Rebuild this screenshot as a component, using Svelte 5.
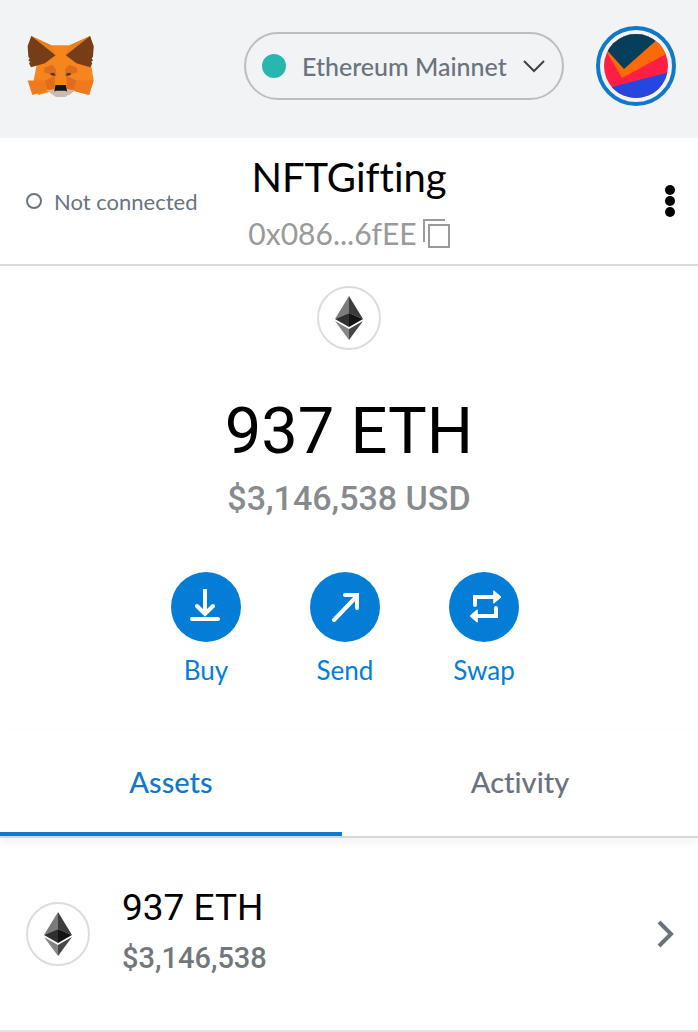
<script lang="ts">
  type Tab = 'assets' | 'activity';

  const networks = ['Ethereum Mainnet'];
  const account = { name: 'NFTGifting', address: '0x086...6fEE' };
  const balance = { amount: '937 ETH', fiat: '$3,146,538' };

  let network = $state(networks[0]);
  let tab = $state<Tab>('assets');
</script>

{#snippet token()}
  <span class="token">
    <svg viewBox="0 0 28 44" width="28" height="44" aria-hidden="true">
      <path d="M14 0 0 23l14-6z" fill="#7b7b7b" />
      <path d="M14 0v17l14 6z" fill="#3c3c3b" />
      <path d="M0 23l14-6v14z" fill="#303030" />
      <path d="M28 23l-14-6v14z" fill="#141414" />
      <path d="M0 25l14 8v11z" fill="#858585" />
      <path d="M28 25l-14 8v11z" fill="#464646" />
    </svg>
  </span>
{/snippet}

<div class="wallet">
  <header>
    <svg class="fox" viewBox="36 28 202 188" role="img" aria-label="MetaMask">
      <path d="M49 30l60 28h56l61-28 11 34-8 52 8 48-14 44-45-12-16 12h-30l-17-12-45 12-14-44 9-46-6-54z" fill="#f6851b" />
      <path d="M49 30l60 28 13 30zM226 30l-61 28-12 30z" fill="#e8821e" />
      <path d="M49 30l73 58-32 24-42 12-6-12 4-4-6-4 4-6-4-6-2-32z" fill="#763d16" />
      <path d="M226 30l-73 58 32 24 42 12 6-12-4-4 6-4-4-6 4-6 2-32z" fill="#763d16" />
      <path d="M88 126l24-9 12 13v20l-36-10zM187 126l-24-9-12 13v20l36-10z" fill="#e06c20" />
      <path d="M38 164h52l6 32-44 12zM237 164h-52l-6 32 44 12z" fill="#ed7a1c" />
      <path d="M90 164l30-14v28l-4 16-20-4zM185 164l-30-14v28l4 16 20-4z" fill="#e06c20" />
      <path d="M105 143l12-2 6 9-13-1zM170 143l-12-2-6 9 13-1z" fill="#4b3a34" />
      <path d="M96 194l24-4h35l24 4-27 20h-29z" fill="#c9bbb0" />
      <path d="M122 178h31l4 20-5-3h-29l-5 3z" fill="#161616" />
    </svg>

    <label class="network">
      <span class="dot"></span>
      <select bind:value={network} aria-label="Network">
        {#each networks as name}
          <option>{name}</option>
        {/each}
      </select>
      <svg viewBox="0 0 22 14" width="22" height="14" aria-hidden="true">
        <path d="M1 2l10 10L21 2" fill="none" stroke="#3f4347" stroke-width="2" />
      </svg>
    </label>

    <button class="avatar" aria-label="My accounts">
      <svg viewBox="0 0 64 64" width="64" height="64" aria-hidden="true">
        <rect width="64" height="64" fill="#ff1f44" />
        <path d="M-2 10L18 44l48-26V-2H-2z" fill="#fb6a09" />
        <path d="M0 13L20 35 56 3 40-4H8z" fill="#063f5b" />
        <path d="M0 55l66-17v28H0z" fill="#2447df" />
      </svg>
    </button>
  </header>

  <section class="account">
    <button class="status"><span class="ring"></span>Not connected</button>
    <button class="identity">
      <span class="name">{account.name}</span>
      <span class="address">
        {account.address}
        <svg viewBox="0 0 27 29" width="27" height="29" aria-hidden="true">
          <path d="M22 1H1v22M6 6h20v22H6z" fill="none" stroke="#989a9b" stroke-width="2" />
        </svg>
      </span>
    </button>
    <button class="more" aria-label="Account options">
      <svg viewBox="0 0 10 32" width="10" height="32" aria-hidden="true">
        <circle cx="5" cy="5" r="5" />
        <circle cx="5" cy="16" r="5" />
        <circle cx="5" cy="27" r="5" />
      </svg>
    </button>
  </section>

  <section class="overview">
    {@render token()}
    <p class="amount">{balance.amount}</p>
    <p class="fiat">{balance.fiat} USD</p>

    <div class="actions">
      <button>
        <span class="circle">
          <svg viewBox="0 0 36 36" width="36" height="36" aria-hidden="true">
            <path d="M17 1v24M9 17l8 8 8-8M4 30h26" />
          </svg>
        </span>
        Buy
      </button>
      <button>
        <span class="circle">
          <svg viewBox="0 0 36 36" width="36" height="36" aria-hidden="true">
            <path d="M7 31L30 7M18 6h12v13" />
          </svg>
        </span>
        Send
      </button>
      <button>
        <span class="circle">
          <svg viewBox="0 0 36 36" width="36" height="36" aria-hidden="true">
            <path d="M9 16V8h19M30 19v8H11" />
            <path class="tip" d="M28 2l7 6-7 6zM11 21l-7 6 7 6z" />
          </svg>
        </span>
        Swap
      </button>
    </div>
  </section>

  <div class="tabs" role="tablist">
    <button role="tab" aria-selected={tab === 'assets'} class:active={tab === 'assets'} onclick={() => (tab = 'assets')}>
      Assets
    </button>
    <button role="tab" aria-selected={tab === 'activity'} class:active={tab === 'activity'} onclick={() => (tab = 'activity')}>
      Activity
    </button>
  </div>

  <button class="asset">
    {@render token()}
    <span class="asset-text">
      <span class="asset-amount">{balance.amount}</span>
      <span class="asset-fiat">{balance.fiat}</span>
    </span>
    <svg viewBox="0 0 18 28" width="18" height="28" aria-hidden="true">
      <path d="M3 2l12 12L3 26" fill="none" stroke="#6a737d" stroke-width="4" />
    </svg>
  </button>
</div>

<style>
  :global(body) {
    margin: 0;
    background: #fff;
  }

  .wallet {
    font-family: Lato, 'Liberation Sans', sans-serif;
    font-variant-ligatures: none;
    color: #000;
  }

  button,
  select {
    margin: 0;
    padding: 0;
    border: 0;
    background: none;
    font: inherit;
    font-variant-ligatures: inherit;
    color: inherit;
    cursor: pointer;
  }

  svg {
    display: block;
    flex: none;
  }

  header {
    display: flex;
    align-items: center;
    gap: 32px;
    padding: 26px 22px 32px 27px;
    background: #f1f3f4;
  }

  .fox {
    width: 67px;
    height: 63px;
    margin-right: auto;
  }

  .network {
    display: flex;
    align-items: center;
    box-sizing: border-box;
    height: 68px;
    padding: 0 17px 0 16px;
    border: 2px solid #bbbec1;
    border-radius: 34px;
    color: #6a737d;
  }

  .dot {
    width: 24px;
    height: 24px;
    margin-right: 16px;
    border-radius: 50%;
    background: #29b6af;
  }

  select {
    appearance: none;
    height: 64px;
    margin-right: 16px;
    font-size: 25px;
    font-weight: 500;
  }

  .avatar {
    display: grid;
    place-items: center;
    box-sizing: border-box;
    width: 80px;
    height: 80px;
    border: 4px solid #1079cb;
    border-radius: 50%;
  }

  .avatar svg {
    border-radius: 50%;
  }

  .account {
    display: grid;
    grid-template-columns: 1fr auto 1fr;
    align-items: center;
    box-sizing: border-box;
    height: 128px;
    padding: 0 23px;
    border-bottom: 2px solid #d8dadb;
  }

  .status {
    display: flex;
    align-items: center;
    gap: 12px;
    padding-left: 3px;
    font-size: 22px;
    white-space: nowrap;
    color: #6a737d;
  }

  .ring {
    box-sizing: border-box;
    width: 16px;
    height: 16px;
    border: 2px solid #6a737d;
    border-radius: 50%;
  }

  .identity {
    display: flex;
    flex-direction: column;
    align-items: center;
    gap: 12px;
    padding-top: 4px;
  }

  .name {
    font-size: 40px;
    line-height: 48px;
  }

  .address {
    display: flex;
    align-items: center;
    gap: 6px;
    font-size: 30px;
    line-height: 40px;
    color: #989a9b;
  }

  .more {
    justify-self: end;
  }

  .overview {
    display: flex;
    flex-direction: column;
    align-items: center;
    padding-top: 20px;
  }

  .token {
    display: grid;
    flex: none;
    place-items: center;
    box-sizing: border-box;
    width: 64px;
    height: 64px;
    border: 2px solid #dcdddd;
    border-radius: 50%;
    background: #fff;
  }

  .amount,
  .fiat {
    margin: 0;
    font-family: Roboto, sans-serif;
  }

  .amount {
    margin-top: 41px;
    font-size: 65px;
    line-height: 80px;
  }

  .fiat {
    margin-top: 7px;
    font-size: 34px;
    font-weight: 500;
    line-height: 40px;
    color: #878b8e;
  }

  .actions {
    display: flex;
    gap: 39px;
    margin-top: 54px;
    padding-right: 8px;
  }

  .actions button {
    display: flex;
    flex-direction: column;
    align-items: center;
    gap: 12px;
    width: 100px;
    font-size: 26px;
    line-height: 32px;
    color: #037dd6;
  }

  .circle {
    display: grid;
    place-items: center;
    width: 70px;
    height: 70px;
    border-radius: 50%;
    background: #037dd6;
  }

  .circle path {
    fill: none;
    stroke: #fff;
    stroke-width: 4;
    stroke-linecap: round;
  }

  .circle .tip {
    fill: #fff;
    stroke-width: 1;
  }

  .tabs {
    display: flex;
    margin-top: 44px;
    border-bottom: 2px solid #d6d9dc;
    box-shadow: 0 4px 8px rgba(0, 0, 0, 0.06);
  }

  .tabs button {
    flex: 1 1 51%;
    box-sizing: border-box;
    height: 106px;
    border-bottom: 4px solid transparent;
    font-size: 29px;
    font-weight: 500;
    color: #6a737d;
  }

  .tabs .active {
    flex-basis: 49%;
    border-bottom-color: #1079cb;
    color: #1079cb;
  }

  .asset {
    display: flex;
    align-items: center;
    gap: 32px;
    box-sizing: border-box;
    width: 100%;
    height: 194px;
    padding: 0 24px 0 26px;
    border-bottom: 2px solid #e2e3e4;
    text-align: left;
  }

  .asset-text {
    display: flex;
    flex: 1;
    flex-direction: column;
    gap: 6px;
    padding-bottom: 6px;
    font-family: Roboto, sans-serif;
  }

  .asset-amount {
    font-size: 37px;
    line-height: 48px;
  }

  .asset-fiat {
    font-size: 29px;
    font-weight: 500;
    line-height: 40px;
    color: #72777b;
  }
</style>
